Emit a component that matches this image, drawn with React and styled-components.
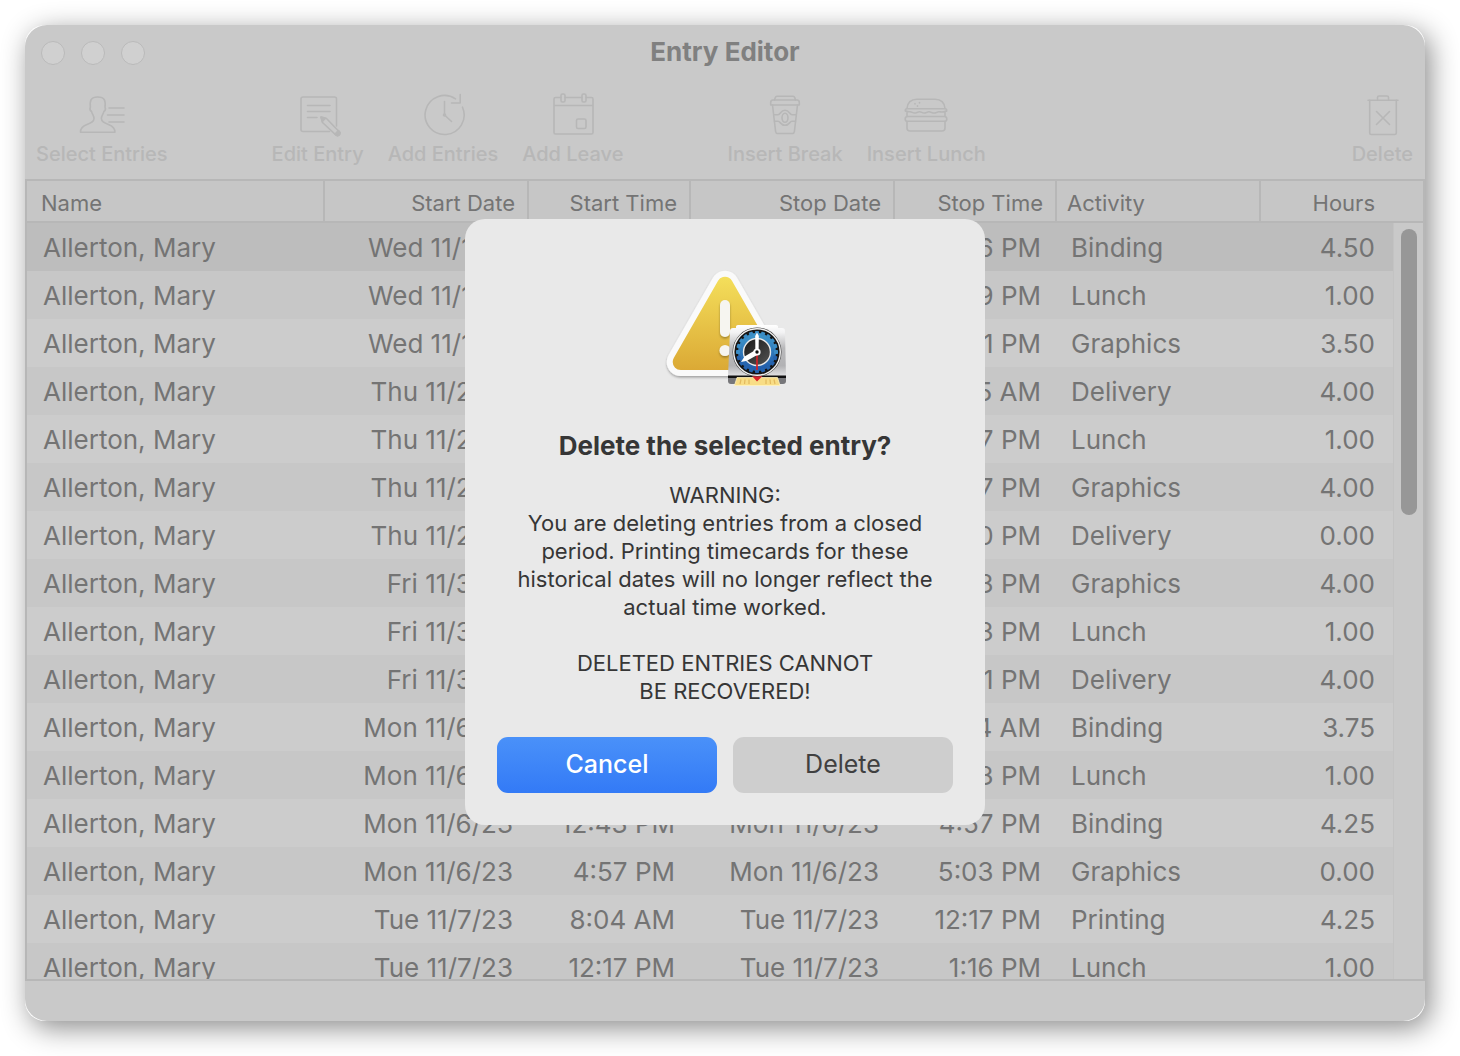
import React from "react";
import styled, { createGlobalStyle, css } from "styled-components";

const GlobalStyle = createGlobalStyle`
  *, *::before, *::after { box-sizing: border-box; }
  body {
    margin: 0;
    background: #fff;
    font-family: Inter, "Liberation Sans", sans-serif;
    -webkit-font-smoothing: antialiased;
  }
  button { font-family: inherit; }
`;

const line = "#b7b7b7";

const Desktop = styled.div`
  height: 100vh;
  min-height: 720px;
  padding: 25px 35px 35px 25px;
`;

const Window = styled.main`
  position: relative;
  display: flex;
  flex-direction: column;
  height: 100%;
  overflow: hidden;
  border-radius: 22px;
  background: #c9c9c9;
`;

const WindowShadow = styled.div`
  height: 100%;
  border-radius: 20px;
  background: #fff;
  box-shadow: 5px 7px 28px rgba(0, 0, 0, 0.46);
`;

const TitleBar = styled.header`
  display: grid;
  grid-template-columns: 1fr auto 1fr;
  align-items: center;
  flex: none;
  height: 56px;
  padding: 0 16px;
`;

const Lights = styled.div`
  display: flex;
  gap: 16px;
`;

const Light = styled.button`
  width: 24px;
  height: 24px;
  padding: 0;
  border: 1px solid #bababa;
  border-radius: 50%;
  background: #d0d0d0;
`;

const WindowTitle = styled.h1`
  margin: 0 0 2px;
  font-size: 26px;
  line-height: 32px;
  font-weight: 700;
  color: #808080;
`;

const Toolbar = styled.nav`
  display: flex;
  flex: none;
  gap: 104px;
  height: 98px;
  padding: 12px 12px 0 11px;
`;

const ToolGroup = styled.div`
  display: flex;
  align-items: flex-start;
  gap: 24px;
  margin-left: ${(p) => (p.$end ? "auto" : "0")};
`;

const ToolButton = styled.button`
  display: flex;
  flex-direction: column;
  align-items: center;
  gap: 5px;
  padding: 0;
  border: 0;
  background: none;
  color: #b7b7b7;
  font-size: 20px;
  line-height: 24px;
  font-weight: 500;
  white-space: nowrap;

  svg {
    display: block;
    width: 48px;
    height: 44px;
    fill: none;
    stroke: currentColor;
    stroke-width: 1.6;
    stroke-linecap: round;
    stroke-linejoin: round;
  }
`;

const TableFrame = styled.section`
  position: relative;
  flex: 1;
  min-height: 0;
  overflow: hidden;
  border: 2px solid ${line};
`;

const Table = styled.table`
  width: 100%;
  table-layout: fixed;
  border-collapse: separate;
  border-spacing: 0;
`;

const Col = styled.col`
  width: ${(p) => (p.$width ? `${p.$width}px` : "auto")};
`;

const HeadCell = styled.th`
  height: 42px;
  padding: 4px ${(p) => (p.$last ? 48 : 12)}px 0 ${(p) => (p.$first ? 14 : 10)}px;
  border-right: ${(p) => (p.$last ? "0" : `2px solid ${line}`)};
  border-bottom: 2px solid ${line};
  background: #c6c6c6;
  color: #747474;
  font-size: 22px;
  line-height: 28px;
  font-weight: 400;
  text-align: ${(p) => p.$align};
  white-space: nowrap;
`;

const Row = styled.tr`
  background: #cccccc;
  &:nth-child(even) { background: #c7c7c7; }
  ${(p) => p.$selected && css`&& { background: #bdbdbd; }`}
`;

const Cell = styled.td`
  height: 48px;
  padding: 2px ${(p) => (p.$last ? 48 : 16)}px 0 ${(p) => (p.$first ? 16 : 14)}px;
  color: #747474;
  font-size: 26px;
  line-height: 32px;
  text-align: ${(p) => p.$align};
  white-space: nowrap;
`;

const ScrollTrack = styled.div`
  position: absolute;
  top: 42px;
  right: 0;
  bottom: 0;
  width: 30px;
  padding: 6px 6px 6px 7px;
  border-left: 1px solid #c3c3c3;
  background: #c9c9c9;
`;

const ScrollThumb = styled.div`
  height: calc(100% * 5 / 13);
  border-radius: 8px;
  background: #979797;
`;

const StatusBar = styled.footer`
  flex: none;
  height: 40px;
`;

const SheetLayer = styled.div`
  position: absolute;
  inset: 0;
  display: flex;
  justify-content: center;
  align-items: flex-start;
  padding-top: 194px;
`;

const Sheet = styled.section`
  display: flex;
  flex-direction: column;
  align-items: center;
  width: 520px;
  padding: 40px 32px 32px;
  border-radius: 20px;
  background: #e9e9e9;
  color: #363636;
  text-align: center;
`;

const SheetIcon = styled.svg`
  display: block;
  width: 128px;
  height: 128px;
  margin-bottom: 42px;
`;

const SheetTitle = styled.h2`
  margin: 0 0 18px;
  font-size: 26px;
  line-height: 34px;
  font-weight: 700;
`;

const SheetText = styled.p`
  margin: 0 0 ${(p) => (p.$last ? 32 : 28)}px;
  font-size: 22px;
  line-height: 28px;
  white-space: nowrap;
`;

const SheetActions = styled.div`
  display: grid;
  grid-template-columns: 1fr 1fr;
  gap: 16px;
  width: 100%;
`;

const SheetButton = styled.button`
  height: 56px;
  padding: 0 0 2px;
  border: 0;
  border-radius: 11px;
  background: ${(p) => (p.$primary ? "linear-gradient(#4a91f9, #337af6)" : "#cecece")};
  color: ${(p) => (p.$primary ? "#fff" : "#404040")};
  font-size: 25px;
  line-height: 32px;
  font-weight: ${(p) => (p.$primary ? 500 : 400)};
`;

const PersonIcon = () => (
  <svg viewBox="0 0 48 44" aria-hidden="true">
    <path d="M2.5 39.3C2.3 34.8 5 33 9 31.5C13 30 16 28.8 16 25.5C16 22.5 14.4 22 13.6 18.6C12 17.4 11.6 15.6 12.4 14C11.6 8 12.6 4 19.7 4C26.8 4 27.8 8 27 14C27.8 15.6 27.4 17.4 25.8 18.6C25 22 23.4 22.5 23.4 25.5C23.4 28.8 26.4 30 30.4 31.5C34.4 33 37.1 34.8 36.9 39.3Z" />
    <path d="M31 15H46M29.5 22H46M31 29H46" />
  </svg>
);

const EditIcon = () => (
  <svg viewBox="0 0 48 44" aria-hidden="true">
    <path d="M42.5 33V6a2 2 0 0 0-2-2H9a2 2 0 0 0-2 2v30.500a2 2 0 0 0 2 2H35.500" />
    <path d="M13.500 12.500H36M13.500 18.500H36M13.500 24.500H23" />
    <path d="M27 24L28.500 29.500L42 42.200C44.500 44 47.300 41 45.200 38.700L32.500 25.500Z" />
    <path d="M27 24L28.300 28.500L31.500 25.300ZM41 41L44.500 37.500L46 39.500L45 42L43 42.500Z" fill="currentColor" />
  </svg>
);

const ClockIcon = () => (
  <svg viewBox="0 0 48 44" aria-hidden="true">
    <path d="M43.500 14.200A19.500 19.500 0 1 1 36.500 5.800" />
    <path d="M41.200 1.500V10H32.500" />
    <path d="M25.500 8.500V22L32.500 28.500" />
    <circle cx="25.500" cy="22" r="1" fill="currentColor" />
  </svg>
);

const CalendarIcon = () => (
  <svg viewBox="0 0 48 44" aria-hidden="true">
    <path d="M12 4.500H6.500A1.500 1.500 0 0 0 5 6V39.500A1.500 1.500 0 0 0 6.500 41H42.500A1.500 1.500 0 0 0 44 39.500V6A1.500 1.500 0 0 0 42.500 4.500H37M16 4.500H33M5 12.500H44" />
    <rect x="12" y="1" width="4" height="8" rx="1.500" />
    <rect x="33" y="1" width="4" height="8" rx="1.500" />
    <rect x="27.500" y="26" width="9.500" height="9.500" rx="1.500" />
  </svg>
);

const CupIcon = () => (
  <svg viewBox="0 0 48 44" aria-hidden="true">
    <path d="M13.500 7L14.300 4.500C14.600 3.500 15 3.200 16 3.200H32C33 3.200 33.400 3.500 33.700 4.500L34.500 7" />
    <path d="M12 7H36C37.500 7 38.300 8 38.300 9.500V12H9.700V9.500C9.700 8 10.500 7 12 7Z" />
    <path d="M11.500 12L14.600 38.500C14.800 40 15.200 40.500 16.500 40.500H31.500C32.800 40.500 33.200 40 33.400 38.500L36.500 12" />
    <path d="M12.700 21.700H17C19.500 21.700 19.500 17.300 24 17.300S28.500 21.700 31 21.700H35.300M13.500 28.300H17C19.500 28.300 19.500 32.300 24 32.300S28.500 28.300 31 28.300H34.500" />
    <ellipse cx="24" cy="24.800" rx="3" ry="4.500" />
  </svg>
);

const BurgerIcon = () => (
  <svg viewBox="0 0 48 44" aria-hidden="true">
    <path d="M5 15.500C5.500 9.500 9 6.200 15 6.200H33C39 6.200 42.500 9.500 43 15.500" />
    <path d="M3.500 18C3 16.500 3.800 15.800 5 15.800H43C44.200 15.800 45 16.500 44.500 18" />
    <path d="M3.500 18C5 18.500 6 18.800 8 18.800C10 18.800 10.500 20 12.500 20S15.500 18.800 17.500 18.800S20 20 22 20S25 18.800 27 18.800S30 20 32 20S35 18.800 37 18.800S42 19.500 44.500 18M5 19V23.500M43 19V23.500" />
    <rect x="3.200" y="23.500" width="41.600" height="4.800" rx="2.400" />
    <path d="M5 28.500V35C5 37 6 38 8 38H40C42 38 43 37 43 35V28.500" />
    <path d="M13 10.500V11M17.500 9.500V10M15.500 12.800V13.200" />
  </svg>
);

const TrashIcon = () => (
  <svg viewBox="0 0 48 44" aria-hidden="true">
    <path d="M10 7.200H40" />
    <path d="M19.500 7V4.500C19.500 3.500 20 3 21 3H29C30 3 30.500 3.500 30.500 4.500V7" />
    <path d="M11.700 7.200V40A1.500 1.500 0 0 0 13.200 41.500H36.800A1.500 1.500 0 0 0 38.300 40V7.200" />
    <path d="M18.500 18.500L31.500 31.500M31.500 18.500L18.500 31.500" />
  </svg>
);

const teeth = Array.from({ length: 20 }, (_, i) => i * 18);

const WarningIcon = () => (
  <SheetIcon viewBox="0 0 128 128" role="img" aria-label="Warning">
    <defs>
      <linearGradient id="yellow" x1="0" y1="17" x2="0" y2="111" gradientUnits="userSpaceOnUse">
        <stop offset="0" stopColor="#f4df5b" />
        <stop offset="1" stopColor="#dba935" />
      </linearGradient>
      <linearGradient id="metal" x1="0" y1="0" x2="0" y2="1">
        <stop offset="0" stopColor="#ffffff" />
        <stop offset="0.150" stopColor="#f2f2f3" />
        <stop offset="0.450" stopColor="#b9b9bb" />
        <stop offset="0.800" stopColor="#b2b2b4" />
        <stop offset="1" stopColor="#e2e2e4" />
      </linearGradient>
      <linearGradient id="blue" x1="0" y1="0" x2="0" y2="1">
        <stop offset="0" stopColor="#3f98cc" />
        <stop offset="1" stopColor="#2059a8" />
      </linearGradient>
      <linearGradient id="face" x1="0" y1="0" x2="1" y2="1">
        <stop offset="0" stopColor="#161616" />
        <stop offset="1" stopColor="#555555" />
      </linearGradient>
      <filter id="soft" x="-20%" y="-20%" width="140%" height="150%">
        <feDropShadow dx="0" dy="1.500" stdDeviation="1.200" floodColor="#000" floodOpacity="0.320" />
      </filter>
    </defs>
    <path d="M64 25.700L108.300 103H19.700Z" fill="#fafafa" stroke="#fafafa" strokeWidth="28" strokeLinejoin="round" filter="url(#soft)" />
    <path d="M64 25.700L108.300 103H19.700Z" fill="url(#yellow)" stroke="url(#yellow)" strokeWidth="16" strokeLinejoin="round" />
    <g fill="#f6f5f0" filter="url(#soft)">
      <rect x="59" y="41" width="10" height="37" rx="5" />
      <circle cx="64" cy="91.500" r="5.500" />
    </g>
    <path d="M75 69V67.500Q75 66 77 66H115Q117 66 117 67.500V69H121Q124 69 124 72L125 117H67L69 72Q69 69 72 69Z" fill="url(#metal)" />
    <path d="M67 116.500H125V119H67Z" fill="#111" />
    <path d="M67 119H125V122Q125 125 122 125H70Q67 125 67 122Z" fill="#77777a" />
    <path d="M76 118.500H116.500L119 126.500H73.500Z" fill="#f8dd86" stroke="#fff3c0" strokeWidth="0.800" />
    <path d="M80 120.500L79 125M84 120.500L83.500 125M88 120.500V125M105 120.500V125M109 120.500L109.500 125M113 120.500L114 125" stroke="#e3b95e" strokeWidth="1.200" />
    <path d="M91 117H101.500L96 122.500Z" fill="#d8232a" />
    <circle cx="96" cy="93" r="24.500" fill="#3a3a3a" />
    <circle cx="96" cy="93" r="24" fill="#f2f2f2" />
    <circle cx="96" cy="93" r="22.600" fill="#151515" />
    <circle cx="96" cy="93" r="19" fill="url(#blue)" />
    {teeth.map((angle) => (
      <rect key={angle} x="94" y="72" width="4" height="4" rx="0.800" fill={angle > 90 && angle < 270 ? "#2563ae" : "#3a8cc5"} transform={`rotate(${angle} 96 93)`} />
    ))}
    <circle cx="96" cy="93" r="13.500" fill="url(#face)" stroke="#e9e9e9" strokeWidth="1.400" />
    <path d="M96 93V111" stroke="#d32026" strokeWidth="1.700" />
    <path d="M94.400 93L94.200 77L96 73.500L97.800 77L97.600 93Z" fill="#fff" />
    <path d="M95 90.800L83.500 97.500L80 103L86 101.800L97.500 95.200Z" fill="#fff" />
    <circle cx="96" cy="93" r="3.600" fill="#fff" />
    <circle cx="96" cy="93" r="1.700" fill="#111" />
  </SheetIcon>
);

const toolGroups = [
  [["Select Entries", PersonIcon]],
  [["Edit Entry", EditIcon], ["Add Entries", ClockIcon], ["Add Leave", CalendarIcon]],
  [["Insert Break", CupIcon], ["Insert Lunch", BurgerIcon]],
  [["Delete", TrashIcon]],
];

const columns = [
  { title: "Name", align: "left" },
  { title: "Start Date", align: "right", width: 204 },
  { title: "Start Time", align: "right", width: 162 },
  { title: "Stop Date", align: "right", width: 204 },
  { title: "Stop Time", align: "right", width: 162 },
  { title: "Activity", align: "left", width: 204 },
  { title: "Hours", align: "right", width: 162 },
];

const entries = [
  ["Wed 11/1/23", "8:06 AM", "12:36 PM", "Binding", "4.50"],
  ["Wed 11/1/23", "12:36 PM", "1:39 PM", "Lunch", "1.00"],
  ["Wed 11/1/23", "1:39 PM", "5:11 PM", "Graphics", "3.50"],
  ["Thu 11/2/23", "7:55 AM", "11:55 AM", "Delivery", "4.00"],
  ["Thu 11/2/23", "11:55 AM", "12:57 PM", "Lunch", "1.00"],
  ["Thu 11/2/23", "12:57 PM", "4:57 PM", "Graphics", "4.00"],
  ["Thu 11/2/23", "4:57 PM", "5:00 PM", "Delivery", "0.00"],
  ["Fri 11/3/23", "8:13 AM", "12:13 PM", "Graphics", "4.00"],
  ["Fri 11/3/23", "12:13 PM", "1:13 PM", "Lunch", "1.00"],
  ["Fri 11/3/23", "1:13 PM", "5:11 PM", "Delivery", "4.00"],
  ["Mon 11/6/23", "8:02 AM", "11:44 AM", "Binding", "3.75"],
  ["Mon 11/6/23", "11:44 AM", "12:43 PM", "Lunch", "1.00"],
  ["Mon 11/6/23", "12:43 PM", "4:57 PM", "Binding", "4.25"],
  ["Mon 11/6/23", "4:57 PM", "5:03 PM", "Graphics", "0.00"],
  ["Tue 11/7/23", "8:04 AM", "12:17 PM", "Printing", "4.25"],
  ["Tue 11/7/23", "12:17 PM", "1:16 PM", "Lunch", "1.00"],
];

export default function App() {
  return (
    <Desktop>
      <GlobalStyle />
      <WindowShadow>
        <Window>
          <TitleBar>
            <Lights>
              <Light aria-label="Close" />
              <Light aria-label="Minimize" />
              <Light aria-label="Zoom" />
            </Lights>
            <WindowTitle>Entry Editor</WindowTitle>
          </TitleBar>
          <Toolbar>
            {toolGroups.map((group, g) => (
              <ToolGroup key={g} $end={g === toolGroups.length - 1}>
                {group.map(([label, Icon]) => (
                  <ToolButton key={label}>
                    <Icon />
                    {label}
                  </ToolButton>
                ))}
              </ToolGroup>
            ))}
          </Toolbar>
          <TableFrame>
            <Table>
              <colgroup>
                {columns.map((c) => <Col key={c.title} $width={c.width} />)}
              </colgroup>
              <thead>
                <tr>
                  {columns.map((c, i) => (
                    <HeadCell key={c.title} scope="col" $align={c.align} $first={i === 0} $last={i === 6}>
                      {c.title}
                    </HeadCell>
                  ))}
                </tr>
              </thead>
              <tbody>
                {entries.map(([date, start, stop, activity, hours], r) => (
                  <Row key={r} $selected={r === 0}>
                    {["Allerton, Mary", date, start, date, stop, activity, hours].map((text, i) => (
                      <Cell key={i} $align={columns[i].align} $first={i === 0} $last={i === 6}>
                        {text}
                      </Cell>
                    ))}
                  </Row>
                ))}
              </tbody>
            </Table>
            <ScrollTrack>
              <ScrollThumb />
            </ScrollTrack>
          </TableFrame>
          <StatusBar />
          <SheetLayer>
            <Sheet role="alertdialog" aria-modal="true" aria-labelledby="sheet-title">
              <WarningIcon />
              <SheetTitle id="sheet-title">Delete the selected entry?</SheetTitle>
              <SheetText>
                WARNING:<br />
                You are deleting entries from a closed<br />
                period. Printing timecards for these<br />
                historical dates will no longer reflect the<br />
                actual time worked.
              </SheetText>
              <SheetText $last>
                DELETED ENTRIES CANNOT<br />
                BE RECOVERED!
              </SheetText>
              <SheetActions>
                <SheetButton $primary>Cancel</SheetButton>
                <SheetButton>Delete</SheetButton>
              </SheetActions>
            </Sheet>
          </SheetLayer>
        </Window>
      </WindowShadow>
    </Desktop>
  );
}
